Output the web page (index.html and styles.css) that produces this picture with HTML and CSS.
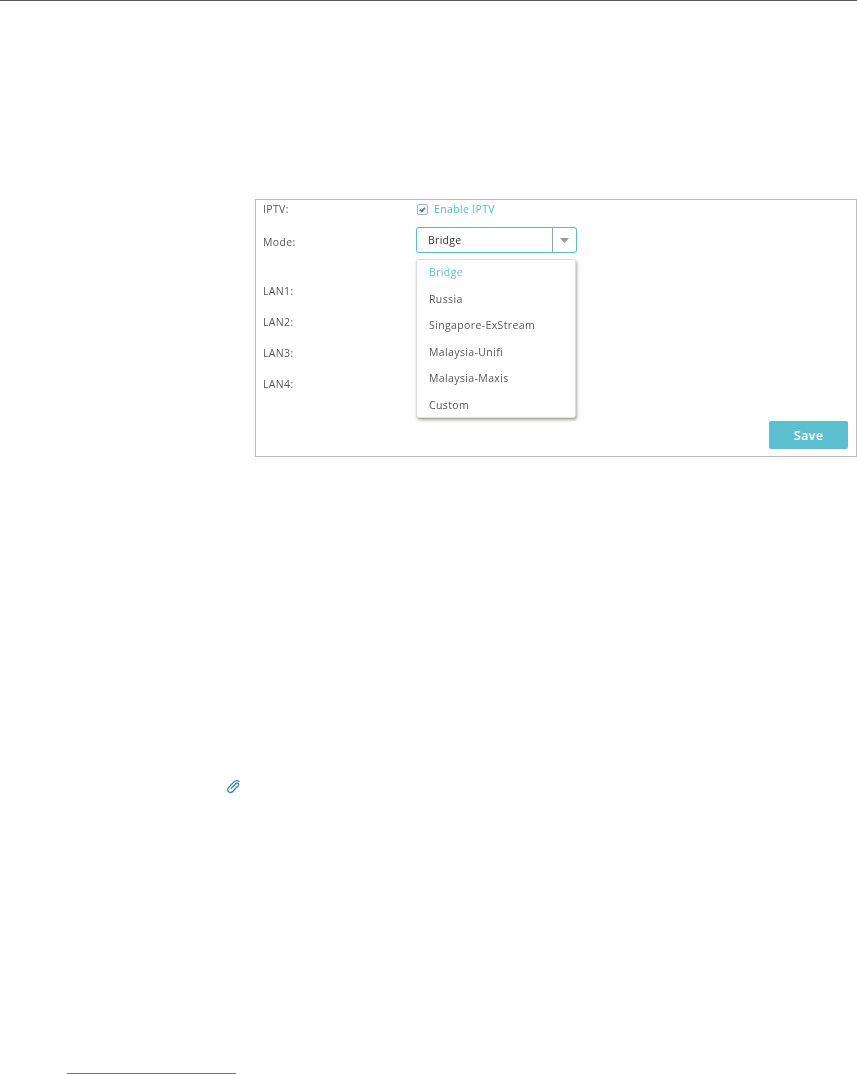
FILE: index.html
```html
<!DOCTYPE html>
<html lang="en">
<head>
<meta charset="utf-8">
<title>IPTV</title>
<link rel="stylesheet" href="styles.css">
</head>
<body>
<div class="top-rule"></div>
<section class="panel">
  <div class="row row-iptv">
    <span class="label">IPTV:</span>
    <label class="check"><span class="box"><svg width="7" height="7" viewBox="0 0 7 7"><path d="M1 3.6 2.8 5.4 6 1.8" fill="none" stroke="#4a7f95" stroke-width="1.7"/></svg></span><span class="check-text">Enable IPTV</span></label>
  </div>
  <div class="row row-mode">
    <span class="label label-mode">Mode:</span>
    <div class="select">
      <span class="select-value">Bridge</span>
      <span class="select-btn"><svg width="9" height="5" viewBox="0 0 9 5"><path d="M0 0H9L4.5 5Z" fill="#9a9a9a"/></svg></span>
      <ul class="menu">
        <li class="active">Bridge</li>
        <li>Russia</li>
        <li>Singapore-ExStream</li>
        <li>Malaysia-Unifi</li>
        <li>Malaysia-Maxis</li>
        <li>Custom</li>
      </ul>
    </div>
  </div>
  <div class="lans">
    <span class="label">LAN1:</span>
    <span class="label">LAN2:</span>
    <span class="label">LAN3:</span>
    <span class="label">LAN4:</span>
  </div>
  <div class="actions"><button class="save" type="button">Save</button></div>
</section>
<div class="clip"><svg width="16" height="15" viewBox="0 0 16 15"><path d="M6.2 9.6 10.8 4.6C11.6 3.8 12.8 3.9 13.3 4.6 13.8 5.3 13.6 6.2 12.9 7L8 12.2C6.8 13.5 4.8 13.7 3.6 12.7 2.4 11.7 2.4 9.9 3.6 8.6L8.8 2.9C10.2 1.5 12.6 1.3 14 2.5" fill="none" stroke="#3f8ba3" stroke-width="1.4" stroke-linecap="round"/></svg></div>
<div class="foot-rule"></div>
</body>
</html>
```
FILE: styles.css
```css
* { box-sizing: border-box; }
html, body { margin: 0; padding: 0; background: #fff; }
body {
  width: 857px;
  height: 1074px;
  overflow: hidden;
  font-family: "Open Sans", "Liberation Sans", sans-serif;
  font-size: 10.5px;
  color: #5a5654;
}
.top-rule { height: 1px; background: #58595b; }
.panel {
  margin: 198px 0 0 255px;
  width: 602px;
  height: 258px;
  border: 1px solid #bdbdbd;
  padding: 0 8px 0 7px;
  display: flex;
  flex-direction: column;
}
.row { display: flex; align-items: center; }
.label { width: 153px; flex: none; letter-spacing: .35px; filter: blur(.3px); }
.row-iptv { height: 18px; }
.check { display: flex; align-items: center; gap: 6px; margin-left: 1px; }
.box {
  width: 11px; height: 11px;
  border: 1px solid #9ab4bf;
  border-radius: 2px;
  display: flex; align-items: center; justify-content: center;
}
.check-text { color: #4fbcd0; letter-spacing: .35px; filter: blur(.3px); }
.row-mode { height: 26px; margin-top: 9px; }
.label-mode { padding-top: 3px; }
.select {
  position: relative;
  width: 161px;
  height: 26px;
  border: 1px solid #58bdd2;
  border-radius: 3px;
  box-shadow: 0 0 1px rgba(88, 189, 210, .7);
  display: flex;
  align-items: center;
  justify-content: space-between;
  color: #333;
}
.select-value { margin-left: 11px; letter-spacing: .3px; filter: blur(.3px); }
.select-btn {
  width: 24px; height: 24px;
  border-left: 1px solid #8fa7b5;
  display: flex; align-items: center; justify-content: center;
}
.menu {
  position: absolute;
  left: -1px; top: 31px;
  width: 160px;
  height: 159px;
  margin: 0;
  padding: 4px 0 0 12px;
  list-style: none;
  background: #fff;
  border: 1px solid #dcdcdc;
  border-radius: 3px;
  box-shadow: 1px 2px 3px rgba(90, 80, 70, .5);
  display: flex;
  flex-direction: column;
  gap: 10.6px;
  color: #5a5654;
  letter-spacing: .38px;
}
.menu li { line-height: 16px; filter: blur(.3px); }
.menu .active { color: #62c0d2; }
.lans {
  margin-top: 31px;
  display: flex;
  flex-direction: column;
  gap: 15.5px;
}
.lans .label { line-height: 15.5px; }
.actions { margin-top: auto; margin-bottom: 7px; display: flex; justify-content: flex-end; }
.save {
  width: 79px; height: 28px;
  border: 0;
  border-radius: 2px;
  background: #5cc0d0;
  color: #fff;
  font: inherit;
  font-size: 12.5px;
  font-weight: 600;
  letter-spacing: .4px;
}
.clip { margin: 322px 0 0 225px; height: 15px; line-height: 0; }
.foot-rule { margin: 279px 0 0 67px; width: 169px; height: 1px; background: #4f8088; }
```
